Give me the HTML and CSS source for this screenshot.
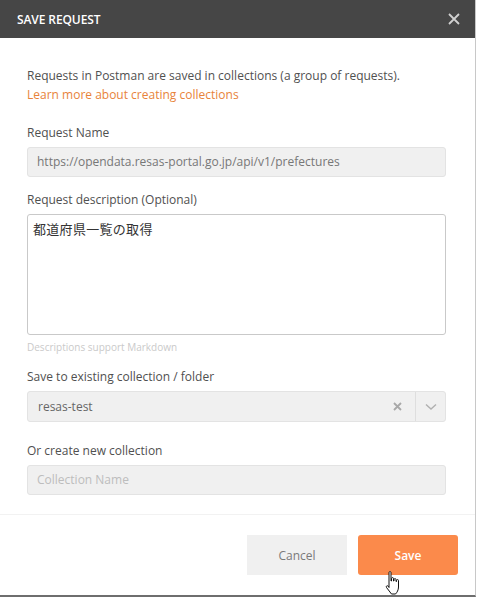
FILE: index.html
```html
<!DOCTYPE html>
<html>
<head>
<meta charset="utf-8">
<link rel="stylesheet" href="styles.css">
</head>
<body>
<div class="dialog">
  <div class="header">
    <span class="title">SAVE REQUEST</span>
    <svg class="close" width="12" height="12" viewBox="0 0 12 12"><path d="M1 1L11 11M11 1L1 11" stroke="#d0d0d0" stroke-width="1.8" fill="none"/></svg>
  </div>
  <div class="body">
    <p class="intro">Requests in Postman are saved in collections (a group of requests).<br><span class="link">Learn more about creating collections</span></p>
    <div class="field">
      <div class="label">Request Name</div>
      <div class="input filled">https://opendata.resas-portal.go.jp/api/v1/prefectures</div>
    </div>
    <div class="field">
      <div class="label">Request description (Optional)</div>
      <div class="textarea">都道府県一覧の取得</div>
      <div class="hint">Descriptions support Markdown</div>
    </div>
    <div class="field">
      <div class="label">Save to existing collection / folder</div>
      <div class="select">
        <span class="select-value">resas-test</span>
        <svg class="clear" width="9" height="9" viewBox="0 0 9 9"><path d="M1 1L8 8M8 1L1 8" stroke="#a8a8a8" stroke-width="1.8" fill="none"/></svg>
        <span class="arrow"><svg width="12" height="8" viewBox="0 0 12 8"><path d="M1 1.5L6 6L11 1.5" stroke="#b0b0b0" stroke-width="1.4" fill="none"/></svg></span>
      </div>
    </div>
    <div class="field last">
      <div class="label">Or create new collection</div>
      <div class="input placeholder">Collection Name</div>
    </div>
  </div>
  <div class="footer">
    <button class="btn cancel">Cancel</button>
    <button class="btn save">Save</button>
    <svg class="cursor" width="22" height="26" viewBox="0 0 22 26"><path d="M6 2.5c0-1.2 2-1.2 2 0V11h.5V8.5c0-1.2 2-1.2 2 0V11h.5V9.5c0-1.2 2-1.2 2 0V11.5h.5v-1c0-1.2 2-1.2 2 0V17c0 3-1.5 5.5-3 7H8.5L3.5 17.5c-.8-1.2.6-2.4 1.700-1.4L6 17.5z" fill="#fff" stroke="#111" stroke-width="1" stroke-linejoin="round"/></svg>
  </div>
</div>
</body>
</html>
```
FILE: styles.css
```css
* { box-sizing: border-box; }
html, body { margin: 0; padding: 0; background: #fff; }
body { font-family: "Open Sans", "Noto Sans CJK JP", sans-serif; color: #505050; }
.dialog {
  width: 476px;
  height: 597px;
  background: #fff;
  border-right: 1px solid #c8c8c8;
  border-bottom: 2px solid #6e6e6e;
  display: flex;
  flex-direction: column;
}
.header {
  height: 38px;
  background: #464646;
  display: flex;
  align-items: center;
  justify-content: space-between;
  padding: 0 15px 0 17px;
}
.title { color: #fff; font-size: 12px; font-weight: 600; letter-spacing: -0.1px; }
.close { display: block; }
.body { padding: 28px 29px 0 27px; flex: 1; }
.intro { margin: 0; font-size: 12px; line-height: 19px; color: #505050; }
.link { color: #e8833a; }
.field { margin-top: 19px; }
.field + .field { margin-top: 13px; }
.field.last { margin-top: 19px; }
.label { font-size: 12px; line-height: 19px; color: #505050; margin-bottom: 5px; }
.input {
  height: 30px;
  border: 1px solid #e3e3e3;
  background: #f0f0f0;
  border-radius: 3px;
  font-size: 12px;
  line-height: 28px;
  padding: 0 9px;
}
.filled { color: #777; }
.placeholder { color: #bdbdbd; }
.textarea {
  height: 121px;
  border: 1px solid #c9c9c9;
  border-radius: 3px;
  font-size: 13px;
  letter-spacing: 0.3px;
  padding: 5px 5px;
  line-height: 18px;
  color: #333;
}
.hint { font-size: 10px; color: #cacaca; line-height: 13px; margin-top: 6px; }
.select {
  height: 31px;
  border: 1px solid #e3e3e3;
  background: #f0f0f0;
  border-radius: 3px;
  display: flex;
  align-items: center;
  font-size: 12px;
  color: #666;
}
.select-value { flex: 1; padding-left: 10px; }
.clear { margin-right: 13px; }
.arrow {
  width: 30px;
  align-self: stretch;
  border-left: 1px solid #dedede;
  display: flex;
  align-items: center;
  justify-content: center;
}
.footer {
  position: relative;
  border-top: 1px solid #f2f2f2;
  height: 81px;
  display: flex;
  justify-content: flex-end;
  align-items: flex-start;
  gap: 11px;
  padding: 20px 17px 0 0;
}
.btn {
  width: 100px;
  height: 40px;
  border: none;
  border-radius: 3px;
  font-family: "Open Sans", sans-serif;
  font-size: 12px;
}
.cancel { background: #f0f0f0; color: #7a7a7a; border-radius: 0; }
.save { background: #fb8a4b; color: #fff; font-weight: 600; }
.cursor { position: absolute; left: 383px; top: 55px; }
```
